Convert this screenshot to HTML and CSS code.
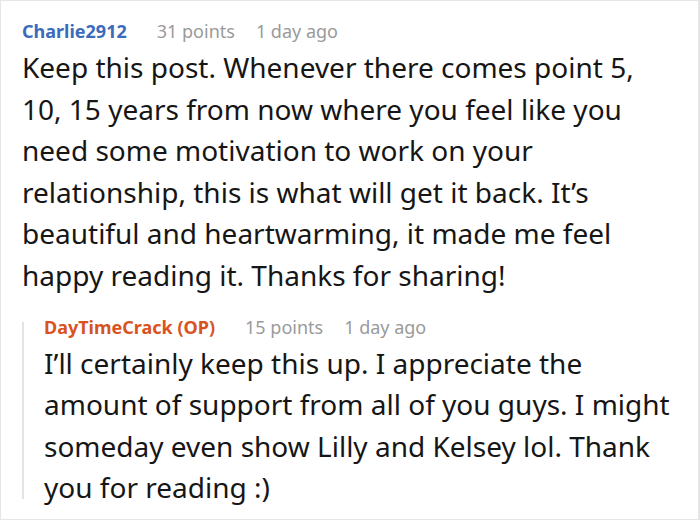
FILE: index.html
```html
<!DOCTYPE html>
<html>
<head>
<meta charset="utf-8">
<link rel="stylesheet" href="styles.css">
</head>
<body>
<div class="frame">
  <div class="comment">
    <div class="meta">
      <span class="user">Charlie2912</span>
      <span class="info points">31 points</span>
      <span class="info">1 day ago</span>
    </div>
    <p class="body">Keep this post. Whenever there comes point 5, 10, 15 years from now where you feel like you need some motivation to work on your relationship, this is what will get it back. It’s beautiful and heartwarming, it made me feel happy reading it. Thanks for sharing!</p>
    <div class="reply">
      <div class="meta">
        <span class="user op">DayTimeCrack (OP)</span>
        <span class="info points">15 points</span>
        <span class="info">1 day ago</span>
      </div>
      <p class="body">I’ll certainly keep this up. I appreciate the amount of support from all of you guys. I might someday even show Lilly and Kelsey lol. Thank you for reading :)</p>
    </div>
  </div>
</div>
</body>
</html>
```

FILE: styles.css
```css
html, body {
  margin: 0;
  padding: 0;
  background: #fff;
}
.frame {
  box-sizing: border-box;
  width: 700px;
  height: 520px;
  border: 1px solid #e6e6e6;
  border-right-width: 2px;
  overflow: hidden;
  font-family: "Noto Sans", "Open Sans", sans-serif;
  color: #161616;
}
.comment {
  padding: 19px 0 0 21px;
}
.meta {
  display: flex;
  font-size: 18px;
  line-height: 22px;
}
.user {
  font-weight: 700;
  color: #3b6bbd;
}
.user.op {
  color: #d9531e;
}
.info {
  color: #9a9a9a;
}
.points {
  margin: 0 21px 0 30px;
}
.body {
  margin: 5px 0 0;
  font-size: 28px;
  line-height: 41.6px;
  width: 648px;
}
.reply {
  position: relative;
  margin-top: 19px;
  padding-left: 22px;
}
.reply::before {
  content: "";
  position: absolute;
  left: 0;
  top: 6px;
  bottom: 10px;
  width: 2px;
  background: #e3e3e3;
}
.reply .body {
  width: 640px;
}
```
